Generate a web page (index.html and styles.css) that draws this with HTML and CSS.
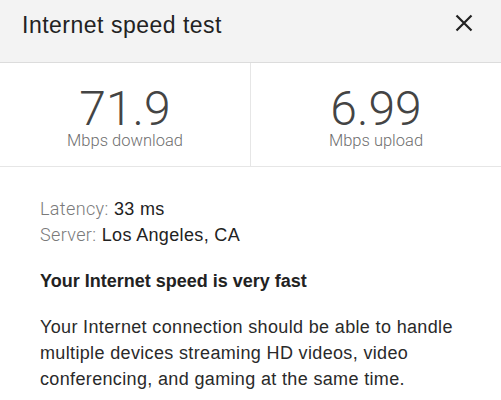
FILE: index.html
```html
<!DOCTYPE html>
<html>
<head>
<meta charset="utf-8">
<link rel="stylesheet" href="styles.css">
</head>
<body>
<div class="card">
  <header class="head">
    <h1 class="title">Internet speed test</h1>
    <svg class="close" width="18" height="18" viewBox="0 0 18 18"><path d="M1.5 1.5L16.5 16.5M16.5 1.5L1.5 16.5" stroke="#222" stroke-width="2.2" fill="none"/></svg>
  </header>
  <section class="stats">
    <div class="stat">
      <div class="num">71.9</div>
      <div class="unit">Mbps download</div>
    </div>
    <div class="stat">
      <div class="num">6.99</div>
      <div class="unit">Mbps upload</div>
    </div>
  </section>
  <section class="details">
    <div class="row"><span class="lbl">Latency:</span> 33 ms</div>
    <div class="row"><span class="lbl">Server:</span> Los Angeles, CA</div>
    <h2 class="verdict">Your Internet speed is very fast</h2>
    <p class="desc">Your Internet connection should be able to handle multiple devices streaming HD videos, video conferencing, and gaming at the same time.</p>
  </section>
</div>
</body>
</html>
```
FILE: styles.css
```css
html, body {
  margin: 0;
  padding: 0;
  background: #fff;
}
body {
  font-family: "Liberation Sans", Arial, sans-serif;
  color: #222;
}
.head {
  display: flex;
  justify-content: space-between;
  align-items: flex-start;
  height: 63px;
  box-sizing: border-box;
  padding: 12px 28px 0 22px;
  background: #f3f3f3;
  border-bottom: 1px solid #dcdcdc;
}
.title {
  margin: 0;
  font-size: 23px;
  letter-spacing: 0.5px;
  font-weight: 400;
  line-height: 27px;
  color: #222;
}
.close {
  margin-top: 2px;
  display: block;
}
.stats {
  display: grid;
  grid-template-columns: 250px 1fr;
  border-bottom: 1px solid #e6e6e6;
}
.stat {
  display: flex;
  flex-direction: column;
  align-items: center;
  padding: 22px 0 17px;
}
.stat + .stat {
  border-left: 1px solid #e6e6e6;
}
.num {
  font-family: Roboto, "Liberation Sans", sans-serif;
  font-weight: 300;
  font-size: 48px;
  line-height: 48px;
  color: #444;
}
.unit {
  font-family: Roboto, "Liberation Sans", sans-serif;
  font-weight: 300;
  font-size: 16.5px;
  line-height: 16px;
  color: #6f6f6f;
}
.details {
  padding: 29px 40px 0;
  font-size: 18px;
  letter-spacing: 0.35px;
  line-height: 26px;
}
.lbl {
  font-family: Roboto, "Liberation Sans", sans-serif;
  font-weight: 300;
  color: #7a7a7a;
}
.verdict {
  margin: 20px 0 0;
  font-size: 18px;
  letter-spacing: 0;
  line-height: 26px;
  font-weight: 700;
  color: #222;
}
.desc {
  margin: 20px 0 0;
  line-height: 26px;
  color: #2a2a2a;
}
```
